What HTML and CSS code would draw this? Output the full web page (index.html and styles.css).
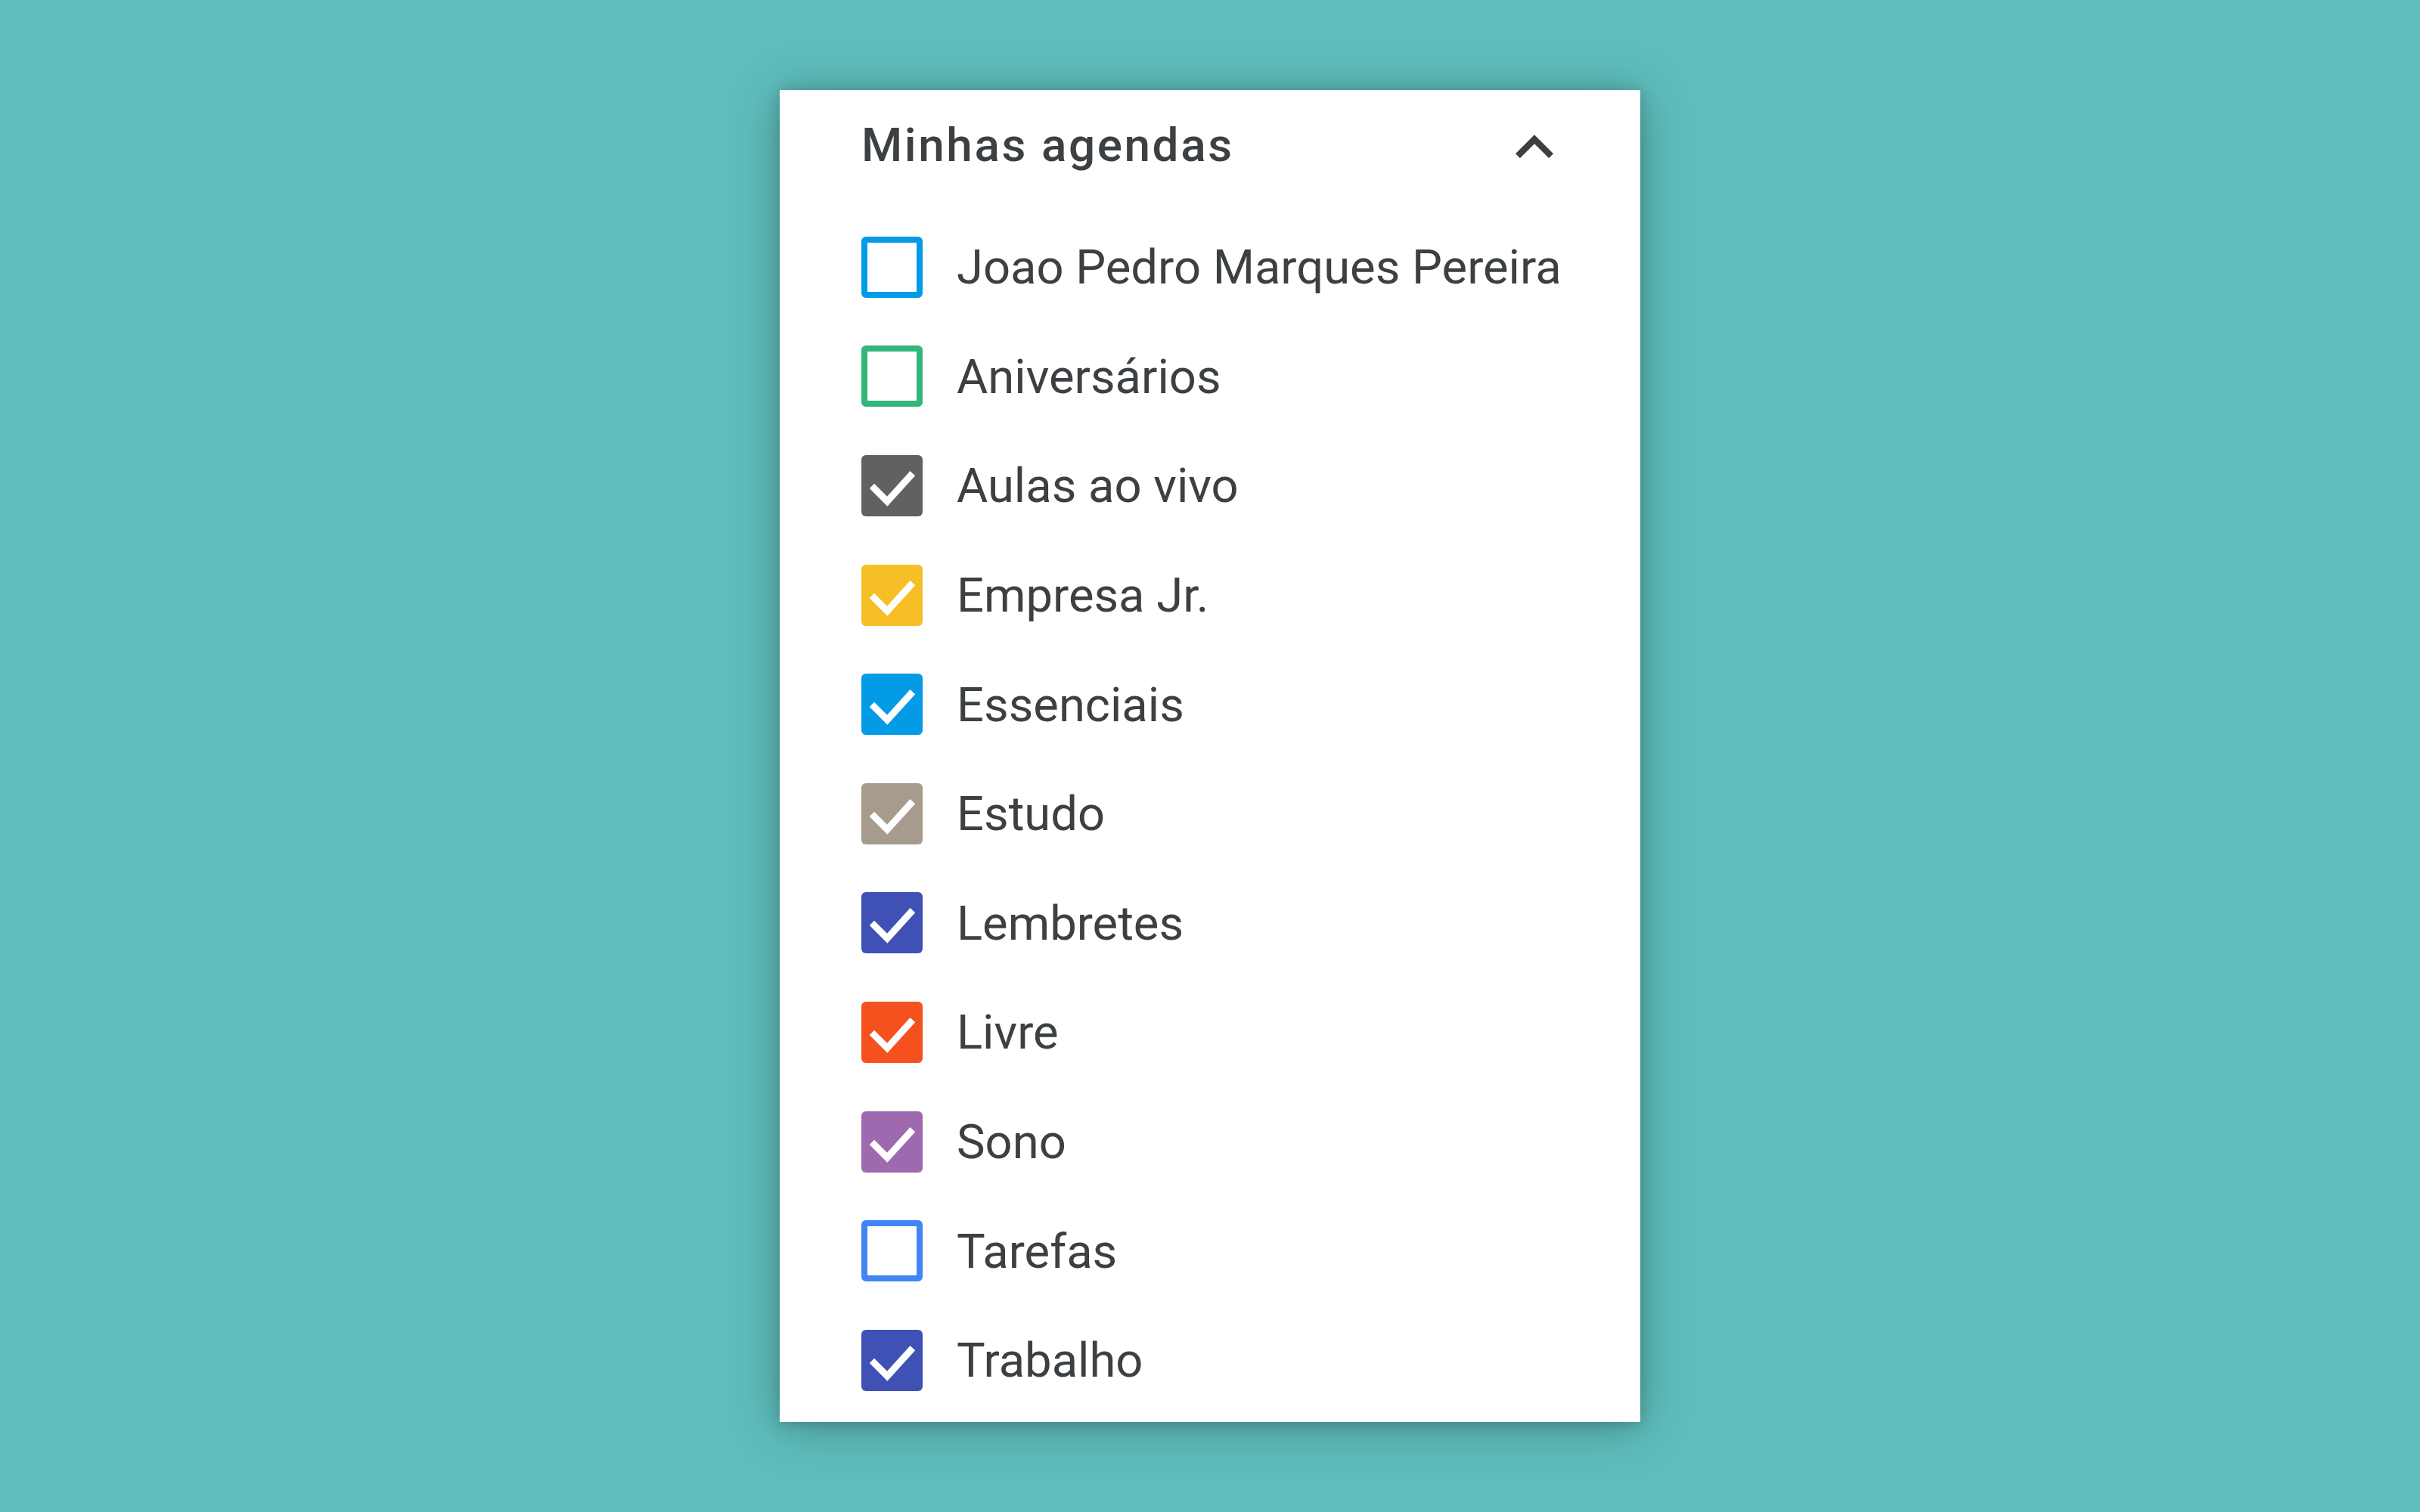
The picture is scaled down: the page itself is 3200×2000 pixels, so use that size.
FILE: index.html
```html
<!DOCTYPE html>
<html lang="pt-BR">
<head>
<meta charset="utf-8">
<title>Minhas agendas</title>
<link rel="stylesheet" href="styles.css">
</head>
<body>
<div class="card">
  <div class="header">
    <span class="title">Minhas agendas</span>
    <svg class="chevron" viewBox="0 0 24 24"><path d="M12 8l-6 6 1.41 1.41L12 10.83l4.59 4.58L18 14z" fill="#3c4043"/></svg>
  </div>
  <ul class="list">
    <li class="row"><span class="box empty c-peacock"></span><span class="label">Joao Pedro Marques Pereira</span></li>
    <li class="row"><span class="box empty c-basil"></span><span class="label">Aniversários</span></li>
    <li class="row"><span class="box filled c-graphite"><svg viewBox="0 0 18 18"><polyline points="3.8,9.8 7.6,13.6 14.4,6.1"/></svg></span><span class="label">Aulas ao vivo</span></li>
    <li class="row"><span class="box filled c-banana"><svg viewBox="0 0 18 18"><polyline points="3.8,9.8 7.6,13.6 14.4,6.1"/></svg></span><span class="label">Empresa Jr.</span></li>
    <li class="row"><span class="box filled c-peacock"><svg viewBox="0 0 18 18"><polyline points="3.8,9.8 7.6,13.6 14.4,6.1"/></svg></span><span class="label">Essenciais</span></li>
    <li class="row"><span class="box filled c-taupe"><svg viewBox="0 0 18 18"><polyline points="3.8,9.8 7.6,13.6 14.4,6.1"/></svg></span><span class="label">Estudo</span></li>
    <li class="row"><span class="box filled c-blueberry"><svg viewBox="0 0 18 18"><polyline points="3.8,9.8 7.6,13.6 14.4,6.1"/></svg></span><span class="label">Lembretes</span></li>
    <li class="row"><span class="box filled c-tangerine"><svg viewBox="0 0 18 18"><polyline points="3.8,9.8 7.6,13.6 14.4,6.1"/></svg></span><span class="label">Livre</span></li>
    <li class="row"><span class="box filled c-grape"><svg viewBox="0 0 18 18"><polyline points="3.8,9.8 7.6,13.6 14.4,6.1"/></svg></span><span class="label">Sono</span></li>
    <li class="row"><span class="box empty c-blue"></span><span class="label">Tarefas</span></li>
    <li class="row"><span class="box filled c-blueberry"><svg viewBox="0 0 18 18"><polyline points="3.8,9.8 7.6,13.6 14.4,6.1"/></svg></span><span class="label">Trabalho</span></li>
  </ul>
</div>
</body>
</html>
```
FILE: styles.css
```css
html, body {
  margin: 0;
  padding: 0;
}
body {
  width: 3200px;
  height: 2000px;
  background: #5ebebc;
  display: flex;
  align-items: center;
  justify-content: center;
  font-family: Roboto, "Liberation Sans", Arial, sans-serif;
  color: #3c4043;
}
.card {
  width: 1138px;
  height: 1762px;
  background: #ffffff;
  box-shadow: 0 6px 60px rgba(0, 0, 0, 0.28), 0 2px 16px rgba(0, 0, 0, 0.18);
  box-sizing: border-box;
  padding: 0 90px 0 108px;
}
.header {
  height: 145px;
  display: flex;
  align-items: center;
  justify-content: space-between;
}
.title {
  font-size: 62px;
  font-weight: 500;
  letter-spacing: 2.6px;
  color: #3c4043;
}
.chevron {
  width: 100px;
  height: 100px;
  margin-top: 6px;
}
.list {
  list-style: none;
  margin: 17px 0 0 0;
  padding: 0;
}
.row {
  height: 144.6px;
  display: flex;
  align-items: center;
  gap: 45px;
}
.box {
  width: 81px;
  height: 81px;
  box-sizing: border-box;
  border-radius: 6px;
  flex: none;
  display: flex;
}
.box svg {
  width: 81px;
  height: 81px;
}
.box polyline {
  fill: none;
  stroke: #ffffff;
  stroke-width: 2;
  stroke-linecap: square;
  stroke-linejoin: miter;
}
.empty {
  border: 8px solid currentColor;
  background: #fff;
}
.filled {
  background: currentColor;
}
.label {
  font-size: 63.3px;
  color: #3c4043;
  white-space: nowrap;
}
.c-peacock { color: #039be5; }
.c-basil { color: #33b679; }
.c-graphite { color: #616161; }
.c-banana { color: #f6bf26; }
.c-taupe { color: #a79b8e; }
.c-blueberry { color: #3f51b5; }
.c-tangerine { color: #f4511e; }
.c-grape { color: #9e69af; }
.c-blue { color: #4285f4; }
```
